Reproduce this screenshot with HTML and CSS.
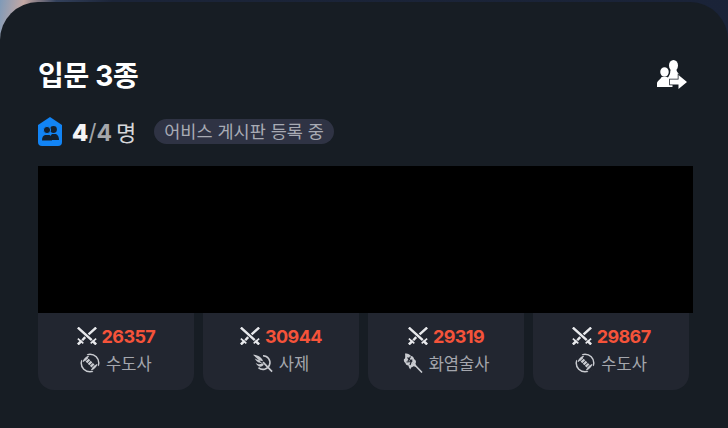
FILE: index.html
```html
<!DOCTYPE html>
<html lang="ko">
<head>
    <meta charset="UTF-8">
    <title>입문 3종</title>
    <link rel="stylesheet" href="styles.css">
</head>
<body>
    <svg class="icon-defs" width="0" height="0">
        <defs>
            <symbol id="swords" viewBox="0 0 19 17">
                <path d="M.8 .5 L14 12.500 M18.200 .5 L11 7 M7.800 9.500 L5 12.500" fill="none" stroke="currentColor" stroke-width="2.300"/>
                <path d="M.8 11 L6 15.500 M18.200 11 L13 15.500" fill="none" stroke="currentColor" stroke-width="1.600"/>
                <path d="M.8 16.500 L4.500 13 M18.200 16.500 L14.500 13" fill="none" stroke="currentColor" stroke-width="2.400"/>
            </symbol>
            <symbol id="class-monk" viewBox="0 0 20 20">
                <circle cx="10" cy="10" r="8.800" fill="none" stroke="currentColor" stroke-width="1.500"/>
                <path d="M3 3 L17 17" stroke="#222630" stroke-width="8"/>
                <path d="M5 5 L15 15" stroke="currentColor" stroke-width="4.200" stroke-dasharray="2.300 .7"/>
                <path d="M3 8.500 L8.500 3 M11.500 17 L17 11.500" stroke="currentColor" stroke-width="1.500"/>
            </symbol>
            <symbol id="class-priest" viewBox="0 0 22 20">
                <path d="M11 2 A7.500 7.500 0 1 1 6 15" fill="none" stroke="currentColor" stroke-width="1.800"/>
                <path d="M0 1 C5 1 10 4 11 8 C8 7 5 7 2 5 C4 9 7 10 10 10 C8 12 6 12 3 10 C6 15 9 15 12 12 Z" fill="currentColor"/>
                <path d="M11 9 L21 19.500" stroke="currentColor" stroke-width="1.800"/>
            </symbol>
            <symbol id="class-fire" viewBox="0 0 20 20">
                <path d="M2 .5 C6 .5 7 2 8 3 C10 3 11 5 11 6 C13 7 13.500 9 12.500 10.500 L13 14 C11 13 10 13 9.500 14 C8 14 7.500 15.500 7.500 16.500 C6 15 5.500 13.500 5.500 12.500 C3.500 12.500 2.500 11.500 2.500 10 C1 9 .5 7.500 1 6 C2 6 2.500 5 2 .5 Z" fill="currentColor"/>
                <path d="M4.500 4.500 L10 10 M7.500 3.500 L5 8 M3.500 9 L8.500 8.500 M9 6.500 L7 12" stroke="#222630" stroke-width="1.200"/>
                <path d="M9 9 L19 19.500" stroke="currentColor" stroke-width="1.600"/>
            </symbol>
        </defs>
    </svg>

    <div class="card">
        <div class="title-row">
            <h1>입문 3종</h1>
            <svg class="share-icon" viewBox="0 0 30 29">
                <ellipse cx="16.500" cy="5.500" rx="4.500" ry="5.500" fill="#fff"/>
                <path d="M11 19 C11 14 13 13 13.500 10 H19.500 C20 13 22.500 13.500 23 17 V20 H11 Z" fill="#fff"/>
                <ellipse cx="7.500" cy="12" rx="5" ry="5.500" stroke="#171d24" stroke-width="1.500" fill="#fff"/>
                <path d="M0 27 V23.500 C0 20.500 3.500 20 4.500 17 H10.500 C11.500 20 15 20 15.500 23.500 V27 Z" fill="#fff"/>
                <path d="M13 19.500 H21.500 V15 L30 22 L21.500 29 V24.500 H13 Z" fill="#fff" stroke="#171d24" stroke-width="1.500" paint-order="stroke"/>
            </svg>
        </div>

        <div class="party-row">
            <svg class="party-icon" viewBox="0 0 24 29">
                <path d="M12 0 L24 8 V25 Q24 29 20 29 H4 Q0 29 0 25 V8 Z" fill="#1284f5"/>
                <circle cx="15.500" cy="12.500" r="3.400" fill="#14202e"/>
                <path d="M12 23 C12 19 13 18 14 17 H18 C20 18 21 20 21 23 Z" fill="#14202e"/>
                <circle cx="9" cy="13" r="3.600" fill="#14202e" stroke="#1284f5"/>
                <path d="M4 23.500 C4 20 5 19 7 18 H11.500 C13 19 14 20 14 23.500 Z" fill="#14202e"/>
            </svg>
            <span class="party-count"><b>4</b><span class="slash">/</span><span class="max">4</span><span class="unit">명</span></span>
            <span class="status-pill">어비스 게시판 등록 중</span>
        </div>

        <div class="hidden-block"></div>

        <div class="members">
            <div class="member">
                <div class="power">
                    <svg class="power-icon"><use href="#swords"/></svg>
                    <span>26357</span>
                </div>
                <div class="job">
                    <svg class="job-icon"><use href="#class-monk"/></svg>
                    <span>수도사</span>
                </div>
            </div>
            <div class="member">
                <div class="power">
                    <svg class="power-icon"><use href="#swords"/></svg>
                    <span>30944</span>
                </div>
                <div class="job">
                    <svg class="job-icon"><use href="#class-priest"/></svg>
                    <span>사제</span>
                </div>
            </div>
            <div class="member">
                <div class="power">
                    <svg class="power-icon"><use href="#swords"/></svg>
                    <span>29319</span>
                </div>
                <div class="job">
                    <svg class="job-icon"><use href="#class-fire"/></svg>
                    <span>화염술사</span>
                </div>
            </div>
            <div class="member">
                <div class="power">
                    <svg class="power-icon"><use href="#swords"/></svg>
                    <span>29867</span>
                </div>
                <div class="job">
                    <svg class="job-icon"><use href="#class-monk"/></svg>
                    <span>수도사</span>
                </div>
            </div>
        </div>
    </div>
</body>
</html>
```

FILE: styles.css
```css
* {
    margin: 0;
    padding: 0;
    box-sizing: border-box;
    font-family: Inter, "Noto Sans CJK KR", sans-serif;
}

html, body {
    height: 428px;
    overflow: hidden;
}

body {
    background: linear-gradient(100deg, #7f9ab8 0, #c4a8a4 3%, #33415c 7%, #1b2438 14%, #1a2338 100%);
}

.icon-defs {
    display: block;
    height: 0;
}

.card {
    height: 426px;
    margin-top: 2px;
    padding: 52px 35px 0 38px;
    background: #171d24;
    border-radius: 38px 38px 0 0;
}

.title-row {
    display: flex;
    justify-content: space-between;
    align-items: center;
    height: 40px;
    padding-right: 6px;
}

h1 {
    font-size: 28px;
    font-weight: 700;
    letter-spacing: -0.3px;
    color: #fff;
}

.share-icon {
    width: 30px;
    height: 29px;
}

.party-row {
    display: flex;
    align-items: center;
    height: 30px;
    margin-top: 22px;
}

.party-icon {
    width: 24px;
    height: 29px;
    margin-right: 10px;
}

.party-count {
    font-size: 23px;
    font-weight: 700;
    color: #f4f4f5;
    margin-right: 18px;
}

.slash {
    font-weight: 400;
    color: #a0a3a8;
}

.max {
    color: #a5a7ab;
}

.unit {
    margin-left: 4px;
    font-size: 22px;
    font-weight: 400;
    color: #d6d7da;
}

.status-pill {
    height: 25px;
    line-height: 25px;
    padding: 0 10px;
    border-radius: 13px;
    background: #2f3344;
    font-size: 17.500px;
    color: #a8abb4;
}

.hidden-block {
    height: 147px;
    margin-top: 20px;
    background: #000;
}

.members {
    display: grid;
    grid-template-columns: repeat(4, 1fr);
    gap: 9.300px;
    margin-right: 4px;
}

.member {
    display: flex;
    flex-direction: column;
    align-items: center;
    height: 77px;
    padding-top: 11px;
    background: #222630;
    border-radius: 0 0 16px 16px;
}

.power {
    display: flex;
    align-items: center;
    gap: 5px;
    height: 24px;
    font-size: 18px;
    font-weight: 700;
    letter-spacing: -0.6px;
    color: #f5533a;
}

.power-icon {
    width: 20px;
    height: 18px;
    color: #e8e9ec;
}

.job {
    display: flex;
    align-items: center;
    gap: 6px;
    height: 26px;
    margin-top: 2px;
    font-size: 16.500px;
    color: #a4a6ad;
}

.job-icon {
    width: 20px;
    height: 20px;
    color: #c9cbd0;
}
```
